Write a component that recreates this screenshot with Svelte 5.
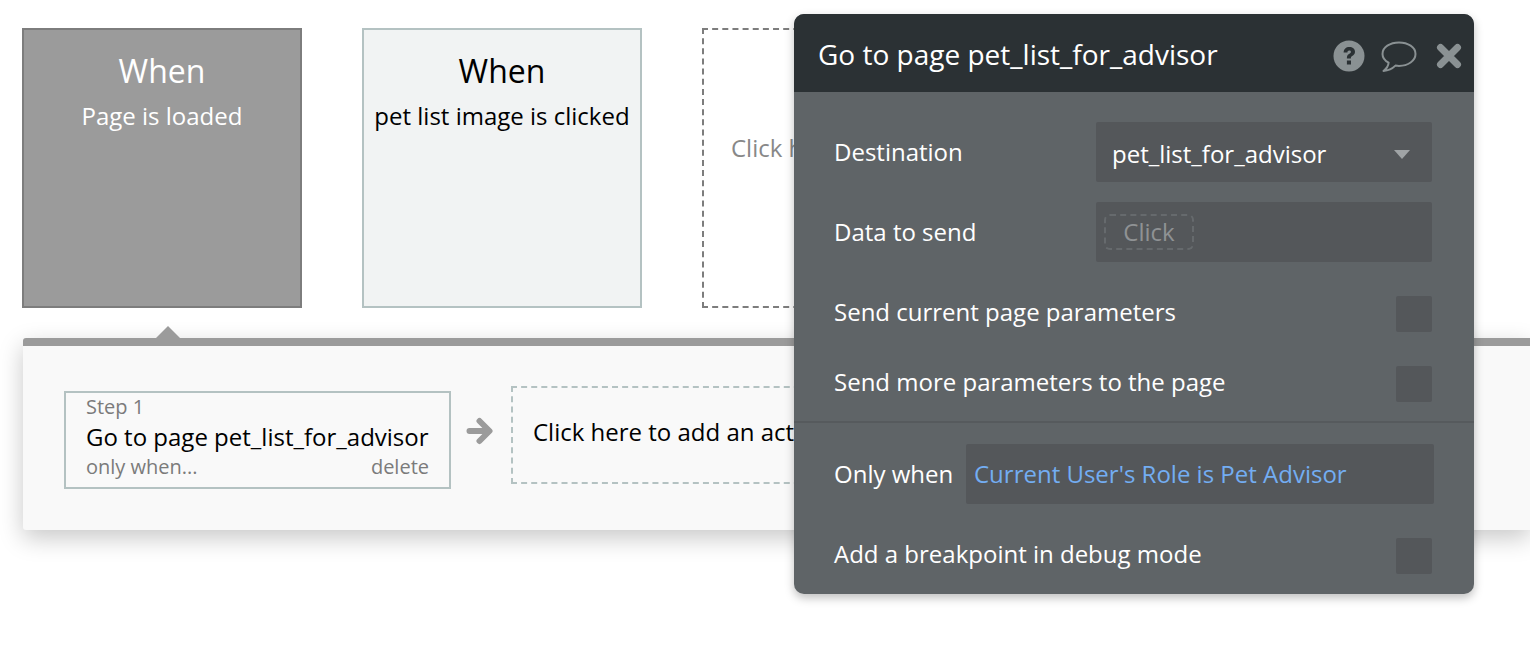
<script>
  const triggers = [
    { title: 'When', sub: 'Page is loaded', kind: 'active' },
    { title: 'When', sub: 'pet list image is clicked', kind: 'plain' },
    { title: '', sub: 'Click here to add an event...', kind: 'empty' }
  ];
</script>

<div class="page">
  <div class="events">
    {#each triggers as t}
      <div class="event {t.kind}">
        {#if t.title}<div class="event-title">{t.title}</div>{/if}
        <div class="event-sub">{t.sub}</div>
      </div>
    {/each}
  </div>

  <div class="workflow">
    <span class="notch"></span>
    <div class="step">
      <div class="step-num">Step 1</div>
      <div class="step-name">Go to page pet_list_for_advisor</div>
      <div class="step-foot">
        <span>only when...</span>
        <span>delete</span>
      </div>
    </div>
    <svg class="arrow" viewBox="0 0 28 28" width="28" height="28">
      <path d="M3.5 14 H22 M13.5 4 L23.5 14 L13.5 24" fill="none" stroke="#9b9b9b" stroke-width="6" stroke-linecap="round" stroke-linejoin="round" />
    </svg>
    <div class="add-action">Click here to add an action...</div>
  </div>

  <div class="editor">
    <div class="editor-head">
      <div class="editor-title">Go to page pet_list_for_advisor</div>
      <div class="editor-icons">
        <svg viewBox="0 0 32 32" width="32" height="32">
          <circle cx="16" cy="16" r="15.5" fill="#8a9193" />
          <path d="M10.6 12.4 C10.8 8.9 13 7 16.3 7 C19.6 7 22 9 22 11.8 C22 14 20.8 15.1 19.2 16.1 C18 16.9 17.9 17.4 17.9 18.5 H13.9 C13.8 16.4 14.3 15.2 16 14.1 C17.3 13.2 17.9 12.8 17.9 11.9 C17.9 11 17.2 10.5 16.2 10.5 C15.1 10.5 14.5 11.2 14.4 12.4 Z M13.9 20.5 H18 V24.6 H13.9 Z" fill="#2b3134" />
        </svg>
        <svg viewBox="0 0 36 31" width="36" height="31">
          <path d="M18 1.5 C9 1.5 1.5 6.2 1.5 13 C1.5 17 4 19.8 7.6 21.6 C7.4 24.6 6 27.2 2.5 30 C7.6 29.6 11.6 27.4 14.4 24.6 C15.8 24.8 16.8 24.9 18 24.9 C27 24.9 34.5 19.8 34.5 13 C34.5 6.2 27 1.5 18 1.5 Z" fill="none" stroke="#8a9193" stroke-width="2" stroke-linejoin="round" />
        </svg>
        <svg class="close" viewBox="0 0 26 26" width="26" height="26">
          <path d="M4.5 4.5 L21.5 21.5 M21.5 4.5 L4.5 21.5" stroke="#8a9193" stroke-width="7" stroke-linecap="round" />
        </svg>
      </div>
    </div>

    <div class="editor-body">
      <div class="field-row">
        <span class="label">Destination</span>
        <div class="input select">
          <span>pet_list_for_advisor</span>
          <span class="caret"></span>
        </div>
      </div>
      <div class="field-row second">
        <span class="label">Data to send</span>
        <div class="input">
          <span class="click-chip">Click</span>
        </div>
      </div>
      <div class="check-row">
        <span class="label">Send current page parameters</span>
        <span class="checkbox"></span>
      </div>
      <div class="check-row">
        <span class="label">Send more parameters to the page</span>
        <span class="checkbox"></span>
      </div>
      <div class="divider"></div>
      <div class="when-row">
        <span class="label">Only when</span>
        <div class="input when"><span>Current User's Role is Pet Advisor</span></div>
      </div>
      <div class="check-row">
        <span class="label">Add a breakpoint in debug mode</span>
        <span class="checkbox"></span>
      </div>
    </div>
  </div>
</div>

<style>
  :global(body) {
    margin: 0;
    background: #fff;
    overflow: hidden;
  }

  .page {
    position: relative;
    width: 1530px;
    height: 646px;
    overflow: hidden;
    padding-top: 28px;
    box-sizing: border-box;
    font-family: "Open Sans", "Liberation Sans", sans-serif;
    color: #000;
  }

  .events {
    display: flex;
    gap: 60px;
    padding-left: 22px;
  }

  .event {
    width: 280px;
    height: 280px;
    box-sizing: border-box;
    border: 2px solid #b4c2c2;
    background: #f1f3f3;
    padding: 21px 0 0;
    text-align: center;
  }

  .event.active {
    background: #9b9b9b;
    border-color: #7d7d7d;
    color: #fff;
  }

  .event.empty {
    border: 2px dashed #7d7d7d;
    background: #fff;
    color: #888;
    padding: 102px 27px 0;
    text-align: left;
    white-space: nowrap;
    overflow: hidden;
  }

  .event-title {
    font-size: 32px;
    line-height: 40px;
  }

  .event-sub {
    font-size: 24px;
    line-height: 32px;
    margin-top: 9px;
  }

  .event.empty .event-sub {
    margin-top: 0;
  }

  .workflow {
    position: relative;
    margin: 30px 0 0 23px;
    height: 192px;
    box-sizing: border-box;
    border-top: 8px solid #9b9b9b;
    border-radius: 3px 0 0 3px;
    background: #f9f9f9;
    box-shadow: 0 8px 25px rgba(0, 0, 0, 0.22);
    display: flex;
    align-items: flex-start;
    padding: 45px 0 0 41px;
  }

  .notch {
    position: absolute;
    left: 132px;
    top: -20px;
    width: 0;
    height: 0;
    border-left: 13px solid transparent;
    border-right: 13px solid transparent;
    border-bottom: 13px solid #9b9b9b;
  }

  .step {
    width: 387px;
    height: 98px;
    box-sizing: border-box;
    border: 2px solid #b4c2c2;
    padding: 0 20px;
  }

  .step-num {
    font-size: 20px;
    line-height: 28px;
    color: #7b7b7b;
  }

  .step-name {
    font-size: 24px;
    line-height: 32px;
  }

  .step-foot {
    display: flex;
    justify-content: space-between;
    font-size: 20px;
    line-height: 28px;
    color: #7b7b7b;
  }

  .arrow {
    margin: 26px 0 0 15px;
    flex-shrink: 0;
  }

  .add-action {
    width: 400px;
    height: 98px;
    margin-left: 17px;
    margin-top: -5px;
    flex-shrink: 0;
    box-sizing: border-box;
    border: 2px dashed #b4c2c2;
    padding: 0 20px;
    font-size: 24px;
    line-height: 88px;
    white-space: nowrap;
  }

  .editor {
    position: absolute;
    left: 794px;
    top: 14px;
    width: 680px;
    height: 580px;
    border-radius: 10px;
    overflow: hidden;
    background: #5f6467;
    color: #fff;
    box-shadow: 0 4px 10px rgba(0, 0, 0, 0.25);
  }

  .editor-head {
    height: 78px;
    background: #2b3134;
    display: flex;
    align-items: center;
    justify-content: space-between;
    padding: 0 12px 0 24px;
  }

  .editor-title {
    font-size: 28px;
    color: #fff;
    padding-top: 2px;
  }

  .editor-icons {
    display: flex;
    align-items: center;
    gap: 16px;
    padding-top: 6px;
  }

  .close {
    margin-left: 3px;
  }

  .editor-body {
    padding: 30px 42px 0 40px;
    font-size: 24px;
  }

  .label {
    white-space: nowrap;
    padding-bottom: 2px;
  }

  .field-row {
    display: flex;
    align-items: center;
    justify-content: space-between;
    height: 60px;
  }

  .field-row.second {
    margin-top: 20px;
  }

  .input {
    height: 60px;
    width: 336px;
    box-sizing: border-box;
    border-radius: 2px;
    background: #54575a;
    display: flex;
    align-items: center;
    padding: 0 17px;
  }

  .select {
    justify-content: space-between;
    padding: 2px 17px 0 16px;
  }

  .caret {
    width: 0;
    height: 0;
    margin: 2px 5px 0 0;
    border-left: 8px solid transparent;
    border-right: 8px solid transparent;
    border-top: 9px solid #a0a4a6;
  }

  .click-chip {
    margin-left: -9px;
    height: 36px;
    width: 90px;
    box-sizing: border-box;
    border: 2px dashed #666a6d;
    border-radius: 6px;
    color: #8f9294;
    text-align: center;
    line-height: 32px;
  }

  .check-row {
    display: flex;
    align-items: center;
    justify-content: space-between;
    height: 36px;
    margin-top: 34px;
  }

  .check-row .label {
    padding-bottom: 5px;
  }

  .checkbox {
    width: 36px;
    height: 36px;
    background: #54575a;
    border-radius: 2px;
  }

  .divider {
    height: 2px;
    margin: 19px -42px 0 -40px;
    background: #565a5d;
  }

  .when-row {
    display: flex;
    align-items: center;
    justify-content: space-between;
    margin: 21px -2px 0 0;
  }

  .input.when {
    width: 468px;
    padding: 0 8px 2px;
    color: #73adf2;
  }
</style>
